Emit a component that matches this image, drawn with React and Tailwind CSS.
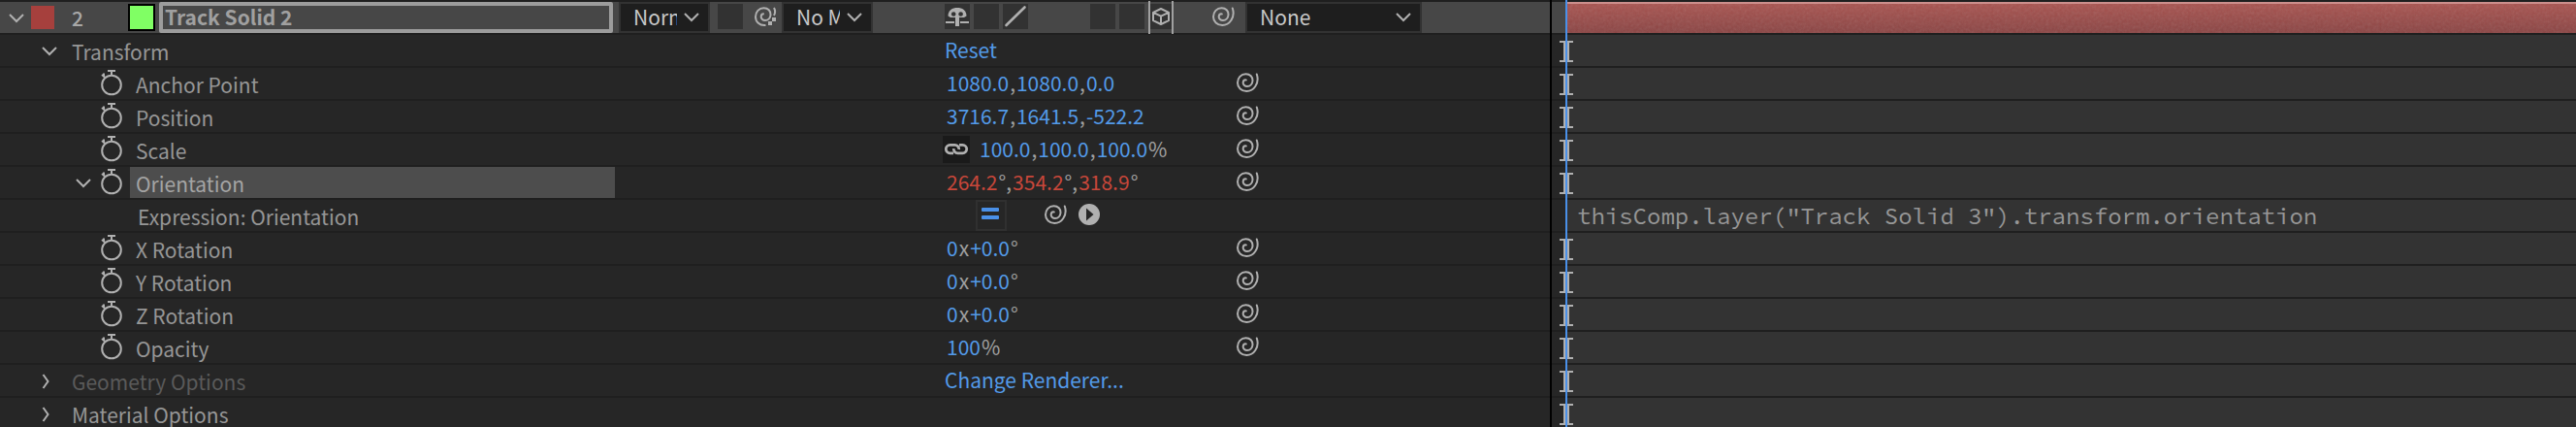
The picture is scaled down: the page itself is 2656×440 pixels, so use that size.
const ICON = "#b0b0b0";

function Chevron() {
  return (
    <svg className="size-4 shrink-0" viewBox="0 0 16 16" fill="none" stroke={ICON} strokeWidth="2" aria-hidden="true">
      <path d="M1 5l7 7 7-7" />
    </svg>
  );
}

function ChevronRight() {
  return (
    <svg className="h-[18px] w-4 shrink-0" viewBox="0 0 16 18" fill="none" stroke={ICON} strokeWidth="2" aria-hidden="true">
      <path d="M1.500 3l5 7-5 7" />
    </svg>
  );
}

function Whip() {
  return (
    <svg className="size-6 shrink-0" viewBox="0 0 24 24" fill="none" stroke={ICON} strokeWidth="2" strokeLinecap="round" aria-hidden="true">
      <path d="M21.800 2.500C23.600 8 22.400 12 20.300 15C18.200 18.200 14.900 20 11.300 20C6 20 2 16.300 2 11.200C2 6.200 5.600 2.200 10.500 2.200C15 2.200 17.700 5.400 17.500 9.200C17.300 12.600 14.900 14.900 12 14.900C9.200 14.900 7.500 13 7.700 10.900C7.900 9.200 9.100 8.200 10.800 8.400" />
    </svg>
  );
}

function WhipDots() {
  return (
    <svg className="size-6 shrink-0" viewBox="0 0 24 24" fill="none" stroke={ICON} strokeWidth="2" aria-hidden="true">
      <path d="M12.500 20C6 20.800 2 16.300 2 11.200C2 6.200 5.600 2.200 10.500 2.200C15 2.200 17.700 5.400 17.500 9.200C17.300 12.600 14.900 14.900 12 14.900C9.200 14.900 7.500 13 7.700 10.900C7.900 9.200 9.100 8.200 10.800 8.400" />
      <path d="M21 2C22.400 4.500 22.600 7.200 21 10" />
      <path d="M19 12h4v4h-4zM15 16h4v4h-4z" fill={ICON} stroke="none" />
    </svg>
  );
}

function Stopwatch() {
  return (
    <svg className="h-7 w-[22px] shrink-0" viewBox="0 0 22 28" fill="none" stroke={ICON} strokeWidth="2" aria-hidden="true">
      <circle cx="11" cy="15.500" r="9.800" />
      <path d="M7 1h8M11 1v5" />
      <path d="M1 5l3 2.500M3 3.500v4" />
    </svg>
  );
}

function Select({ label, value, width, textWidth }) {
  return (
    <label className={`flex h-8 shrink-0 bg-[#323232] p-[2px] ${width}`}>
      <span className="flex flex-1 items-center justify-between bg-[#1e1e1e] pb-[3px] pl-[13px] pr-[9px]">
        <select aria-label={label} defaultValue={value} className={`h-[26px] appearance-none overflow-hidden bg-transparent p-0 leading-[26px] text-[#c8c8c8] outline-none ${textWidth}`}>
          <option>{value}</option>
        </select>
        <Chevron />
      </span>
    </label>
  );
}

function Switch({ label, className = "", children }) {
  return (
    <button aria-label={label} className={`mt-[2px] size-[26px] shrink-0 self-start bg-[#323232] ${className}`}>
      {children}
    </button>
  );
}

function LayerRow() {
  return (
    <div className="flex h-[34px] items-center border-t-2 border-[#1f1f1f] bg-[#474747] pl-[9px]">
      <button aria-label="Collapse layer"><Chevron /></button>
      <button aria-label="Label colour" className="ml-[7px] size-6 bg-[#a6403d]" />
      <span className="ml-[18px] w-[58px] font-medium text-[#a8a8a8]">2</span>
      <button aria-label="Solid colour" className="size-7 border-2 border-black bg-[#80ff64]" />
      <input
        aria-label="Layer name"
        defaultValue="Track Solid 2"
        className="ml-1 h-8 w-[468px] rounded-[2px] border-4 border-[#9c9c9c] bg-transparent px-[2px] pb-[2px] font-bold text-[#a0a0a0] outline-none"
      />
      <div className="ml-[6px]"><Select label="Mode" value="Normal" width="w-[94px]" textWidth="w-[45px]" /></div>
      <Switch label="Preserve transparency" className="ml-2" />
      <button aria-label="Matte pick whip" className="ml-[11px]"><WhipDots /></button>
      <div className="ml-[5px]"><Select label="Track matte" value="No Matte" width="w-[94px]" textWidth="w-[45px]" /></div>
      <div className="ml-[74px] flex gap-1 self-stretch">
        <Switch label="Shy">
          <svg viewBox="0 0 26 26" fill={ICON} aria-hidden="true">
            <path d="M3.500 12.500C3.500 6.500 8 4 13 4s9.500 2.500 9.500 8.500L20 14H6z" />
            <path d="M11 11h4v12h-4zM1 18h9v2H1zM16 18h9v2h-9z" />
            <circle cx="9.200" cy="10.500" r="2.300" fill="#323232" />
            <circle cx="16.600" cy="10.500" r="2.300" fill="#323232" />
          </svg>
        </Switch>
        <Switch label="Collapse transformations" />
        <Switch label="Quality">
          <svg viewBox="0 0 26 26" stroke={ICON} strokeWidth="2.600" strokeLinecap="round" aria-hidden="true">
            <path d="M3.500 22L22.500 3.500" />
          </svg>
        </Switch>
      </div>
      <div className="ml-16 flex gap-1 self-stretch">
        <Switch label="Motion blur" />
        <Switch label="Adjustment layer" />
        <button aria-label="3D layer" className="-my-px flex h-[34px] w-[26px] items-start border-x-2 border-[#a0a0a0] pt-[3px]">
          <svg className="h-[26px] w-[22px] bg-[#323232]" viewBox="2 0 22 26" fill="none" stroke={ICON} strokeWidth="2" strokeLinejoin="round" aria-hidden="true">
            <path d="M13 5l8 3.800v8.400l-8 3.800-8-3.800V8.800zM5 8.800l8 3.800 8-3.800M13 12.600V21" />
          </svg>
        </button>
      </div>
      <button aria-label="Parent pick whip" className="ml-[39px]"><Whip /></button>
      <div className="ml-[11px]"><Select label="Parent" value="None" width="w-[182px]" textWidth="w-[120px]" /></div>
    </div>
  );
}

function Name({ row }) {
  if (row.kind === "group")
    return (
      <div className="flex items-center pl-[43px]">
        <button aria-label={`Toggle ${row.name}`}>{row.open ? <Chevron /> : <ChevronRight />}</button>
        <span className={`ml-[15px] pt-[2px] ${row.dim ? "text-[#5a5a5a]" : ""}`}>{row.name}</span>
      </div>
    );
  if (row.kind === "expression") return <div className="pl-[142px] pt-[2px]">{row.name}</div>;
  return (
    <div className="flex items-center">
      <div className="flex w-[104px] justify-end pr-[10px]">
        {row.selected && <button aria-label="Toggle expression"><Chevron /></button>}
      </div>
      <button aria-label={`Animate ${row.name}`}><Stopwatch /></button>
      <span className={`ml-2 h-8 w-[500px] pl-[6px] pt-[2px] ${row.selected ? "bg-[#4d4d4d] text-[#a4a4a4]" : ""}`}>{row.name}</span>
    </div>
  );
}

function Values({ row }) {
  if (row.kind === "expression")
    return (
      <div className="flex items-center pl-[34px]">
        <button aria-label="Enable expression" className="flex h-8 w-8 flex-col gap-1 border-2 border-[#303030] pl-1 pt-[6px]">
          <span className="h-1 w-[18px] rounded-[1px] bg-[#4a90e8]" />
          <span className="h-1 w-[18px] rounded-[1px] bg-[#4a90e8]" />
        </button>
        <button aria-label="Expression pick whip" className="ml-[38px]"><Whip /></button>
        <button aria-label="Expression language menu" className="ml-3 pb-[2px]">
          <svg className="size-[22px]" viewBox="0 0 22 22" aria-hidden="true">
            <circle cx="11" cy="11" r="11" fill={ICON} />
            <path d="M8 4.500v13l7.500-6.500z" fill="#262626" />
          </svg>
        </button>
      </div>
    );
  if (row.action) return <button className="pb-[2px] pl-[2px] text-left text-[#539ae8]">{row.action}</button>;
  if (!row.parts) return null;
  return (
    <div className="flex items-center">
      {row.linked && (
        <button aria-label="Constrain proportions" className="mr-[6px] size-7 bg-[#1a1a1a]">
          <svg viewBox="0 0 28 28" fill="none" stroke={ICON} strokeWidth="2.800" aria-hidden="true">
            <path d="M11 17.800H7.500a4.200 4.200 0 0 1 0-8.400H12.500a4.200 4.200 0 0 1 4.200 4.600" />
            <path d="M17 9.400h3.500a4.200 4.200 0 0 1 0 8.400H15.500a4.200 4.200 0 0 1-4.200-4.600" />
          </svg>
        </button>
      )}
      <span className="whitespace-pre pb-[2px] pl-1 text-[#a0a0a0]">
        {row.parts.map(([value, unit], i) => (
          <span key={i}>
            <button className={row.selected ? "text-[#c8473a]" : "text-[#539ae8]"}>{value}</button>
            {unit && <span className="px-px">{unit}</span>}
          </span>
        ))}
      </span>
    </div>
  );
}

const ROWS = [
  { kind: "group", name: "Transform", open: true, action: "Reset" },
  { name: "Anchor Point", parts: [["1080.0", ","], ["1080.0", ","], ["0.0", ""]] },
  { name: "Position", parts: [["3716.7", ","], ["1641.5", ","], ["-522.2", ""]] },
  { name: "Scale", linked: true, parts: [["100.0", ","], ["100.0", ","], ["100.0", "%"]] },
  { name: "Orientation", selected: true, parts: [["264.2", "°,"], ["354.2", "°,"], ["318.9", "°"]] },
  { kind: "expression", name: "Expression: Orientation", code: 'thisComp.layer("Track Solid 3").transform.orientation' },
  { name: "X Rotation", parts: [["0", "x"], ["+0.0", "°"]] },
  { name: "Y Rotation", parts: [["0", "x"], ["+0.0", "°"]] },
  { name: "Z Rotation", parts: [["0", "x"], ["+0.0", "°"]] },
  { name: "Opacity", parts: [["100", "%"]] },
  { kind: "group", name: "Geometry Options", dim: true, action: "Change Renderer..." },
  { kind: "group", name: "Material Options" },
];

function PropertyRow({ row }) {
  return (
    <div className="grid h-[34px] grid-cols-[972px_302px_1fr] items-center border-t-2 border-[#1f1f1f]">
      <Name row={row} />
      <Values row={row} />
      {row.parts ? <button aria-label={`${row.name} pick whip`} className="justify-self-start"><Whip /></button> : null}
    </div>
  );
}

function KeyMarker() {
  return (
    <svg className="absolute left-2 top-[6px] h-[22px] w-[14px]" viewBox="0 0 14 22" fill={ICON} aria-hidden="true">
      <path d="M0 0h14v2h-4v18h4v2H0v-2h4V2H0z" />
    </svg>
  );
}

function Timeline() {
  return (
    <section aria-label="Timeline" className="relative min-w-0 flex-1">
      <div className="flex h-[34px] border-t-2 border-[#1f1f1f] bg-[#474747] pl-4">
        <div className="relative h-8 flex-1 border-t-2 border-[#cc8f8c] bg-linear-to-b from-[#a8534f] to-[#8a4443]">
          <svg className="absolute inset-0 h-full w-full opacity-15" aria-hidden="true">
            <filter id="grain">
              <feTurbulence type="fractalNoise" baseFrequency="0.35" numOctaves="2" />
              <feColorMatrix type="saturate" values="0" />
            </filter>
            <rect width="100%" height="100%" filter="url(#grain)" />
          </svg>
        </div>
      </div>
      {ROWS.map((row) => (
        <div key={row.name} className="relative flex h-[34px] border-t-2 border-[#1f1f1f] bg-linear-to-r from-[#262626] from-[14px] to-[#333333] to-[14px] pl-[26px]">
          {row.code ? (
            <code className="whitespace-pre pt-[2px] font-['Source_Code_Pro','Liberation_Mono',monospace] text-[24px] leading-[30px]">{row.code}</code>
          ) : (
            <KeyMarker />
          )}
        </div>
      ))}
      <div className="absolute inset-y-0 left-[14px] w-[2px] bg-[#4a90e8]" />
    </section>
  );
}

export default function App() {
  return (
    <main className="flex max-h-screen overflow-hidden bg-[#262626] font-['Noto_Sans_CJK_SC',sans-serif] text-[21px] leading-[30px] text-[#969696]">
      <section aria-label="Layers" className="w-[1600px] shrink-0 border-r-2 border-black">
        <LayerRow />
        {ROWS.map((row) => (
          <PropertyRow key={row.name} row={row} />
        ))}
      </section>
      <Timeline />
    </main>
  );
}
